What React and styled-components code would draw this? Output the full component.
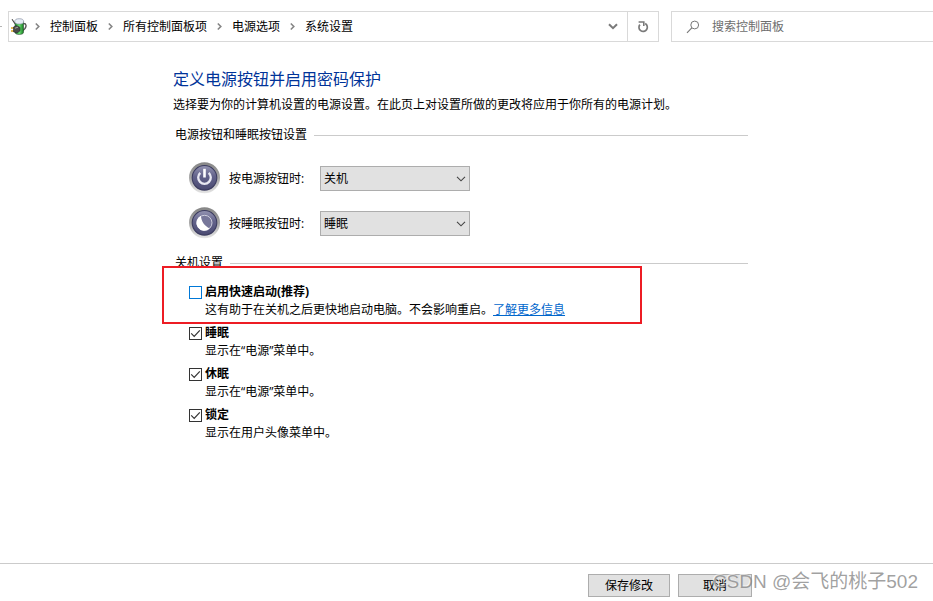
import React from "react";
import styled, { createGlobalStyle } from "styled-components";

const POWER_ACTIONS = ["不采取任何操作", "睡眠", "休眠", "关机"];

const CRUMBS = ["控制面板", "所有控制面板项", "电源选项", "系统设置"];

const SHUTDOWN_OPTIONS = [
  {
    id: "fast-startup",
    label: "启用快速启动(推荐)",
    hint: "这有助于在关机之后更快地启动电脑。不会影响重启。",
    link: "了解更多信息",
    checked: false,
    highlighted: true,
  },
  {
    id: "sleep",
    label: "睡眠",
    hint: "显示在“电源”菜单中。",
    checked: true,
  },
  {
    id: "hibernate",
    label: "休眠",
    hint: "显示在“电源”菜单中。",
    checked: true,
  },
  {
    id: "lock",
    label: "锁定",
    hint: "显示在用户头像菜单中。",
    checked: true,
  },
];

function App() {
  return (
    <>
      <GlobalStyle />
      <Page>
        <TopBar>
          <Gutter>
            <svg width="3" height="3" viewBox="0 0 3 3">
              <path d="M0 1.5h2" stroke="#b5b5b5" />
            </svg>
          </Gutter>
          <AddressBar />
          <SearchBox>
            <SearchIcon />
            <SearchInput
              type="search"
              aria-label="搜索控制面板"
              placeholder="搜索控制面板"
            />
          </SearchBox>
        </TopBar>
        <Main>
          <Title>定义电源按钮并启用密码保护</Title>
          <Intro>
            选择要为你的计算机设置的电源设置。在此页上对设置所做的更改将应用于你所有的电源计划。
          </Intro>
          <section>
            <Legend $top={12}>电源按钮和睡眠按钮设置</Legend>
            <ButtonRows>
              <ButtonSetting
                id="power-button"
                icon={<PowerIcon />}
                label="按电源按钮时:"
                value="关机"
              />
              <ButtonSetting
                id="sleep-button"
                icon={<MoonIcon />}
                label="按睡眠按钮时:"
                value="睡眠"
              />
            </ButtonRows>
          </section>
          <section>
            <Legend $top={14}>关机设置</Legend>
            <OptionList>
              {SHUTDOWN_OPTIONS.map((option) => (
                <ShutdownOption
                  key={option.id}
                  {...option}
                />
              ))}
            </OptionList>
          </section>
        </Main>
        <Footer>
          <Button $width={82}>保存修改</Button>
          <Button $width={74}>取消</Button>
          <Watermark>CSDN @会飞的桃子502</Watermark>
        </Footer>
      </Page>
    </>
  );
}

function AddressBar() {
  return (
    <Address>
      <PowerOptionsIcon />
      <Crumbs>
        {CRUMBS.map((crumb) => (
          <Crumb key={crumb}>
            <Separator viewBox="0 0 25 9">
              <path
                d="M10.8 1.5l3 3-3 3"
                fill="none"
                stroke="#858585"
                strokeWidth="1.6"
              />
            </Separator>
            <CrumbLink href="#">{crumb}</CrumbLink>
          </Crumb>
        ))}
      </Crumbs>
      <BarButton
        $width={28}
        aria-label="历史记录"
      >
        <svg width="10" height="7" viewBox="0 0 10 7">
          <path
            d="M1 1.2l4 4 4-4"
            fill="none"
            stroke="#7a7a7a"
            strokeWidth="2"
          />
        </svg>
      </BarButton>
      <BarButton
        $width={31}
        $divided
        aria-label="刷新"
      >
        <svg width="12" height="13" viewBox="0 0 12 13">
          <path
            d="M8.2 3.6A4.2 4.2 0 1 1 2.9 4.6"
            fill="none"
            stroke="#7a7a7a"
            strokeWidth="1.7"
          />
          <path
            d="M1.6 2h5.2v4"
            fill="none"
            stroke="#7a7a7a"
            strokeWidth="1.6"
          />
        </svg>
      </BarButton>
    </Address>
  );
}

function ButtonSetting({ id, icon, label, value }) {
  return (
    <ButtonRow>
      {icon}
      <RowLabel htmlFor={id}>{label}</RowLabel>
      <SelectWrapper>
        <Select
          id={id}
          defaultValue={value}
        >
          {POWER_ACTIONS.map((action) => (
            <option key={action}>{action}</option>
          ))}
        </Select>
        <SelectArrow viewBox="0 0 10 6">
          <path
            d="M1 .8l4 4 4-4"
            fill="none"
            stroke="#444"
            strokeWidth="1.1"
          />
        </SelectArrow>
      </SelectWrapper>
    </ButtonRow>
  );
}

function ShutdownOption({ id, label, hint, link, checked, highlighted }) {
  return (
    <Option>
      <CheckWrapper>
        <Checkbox
          id={id}
          type="checkbox"
          defaultChecked={checked}
          $active={highlighted}
        />
        <CheckMark viewBox="0 0 13 13">
          <path
            d="M2.2 6.4l3 3 5.6-6"
            fill="none"
            stroke="#333"
            strokeWidth="1.2"
          />
        </CheckMark>
      </CheckWrapper>
      <OptionLabel htmlFor={id}>{label}</OptionLabel>
      <Hint>
        {hint}
        {link && <HelpLink href="#">{link}</HelpLink>}
      </Hint>
      {highlighted && <Highlight />}
    </Option>
  );
}

function PowerOptionsIcon() {
  return (
    <AddressIcon viewBox="0 0 16 18">
      <defs>
        <linearGradient id="battery" x1="0" x2="1">
          <stop offset="0" stopColor="#1c8a2c" />
          <stop offset=".5" stopColor="#6be070" />
          <stop offset="1" stopColor="#167a22" />
        </linearGradient>
      </defs>
      <path
        d="M14.5 5.5c3.2 0 3 3 1.5 5L14 12.5"
        fill="none"
        stroke="#555"
        strokeWidth="1.4"
      />
      <path
        d="M6 3.5v11c0 2.6 8.5 2.6 8.5 0v-11z"
        fill="url(#battery)"
        stroke="#2c4a30"
        strokeWidth=".6"
      />
      <ellipse
        cx="10.2"
        cy="3.4"
        rx="4.4"
        ry="2.7"
        fill="#e6ecf5"
        stroke="#8b93a5"
        strokeWidth=".7"
      />
      <path d="M3 1.2l3 4.5" stroke="#444" strokeWidth="1.1" />
      <path d="M2 10h4M2 13h4" stroke="#d9a520" strokeWidth="1.4" />
      <path
        d="M4.5 9l3-1.4 3.5 1.8v3.4L8 15l-3.5-1.2z"
        fill="#4a4a4a"
        stroke="#2a2a2a"
        strokeWidth=".6"
      />
      <path d="M6 10.2l3-1" stroke="#aaa" strokeWidth=".9" />
    </AddressIcon>
  );
}

function SearchIcon() {
  return (
    <svg width="14" height="14" viewBox="0 0 14 14">
      <circle cx="8.7" cy="5" r="3.9" fill="none" stroke="#777" />
      <path d="M5.8 7.8L1 12.8" stroke="#777" strokeWidth="1.1" />
    </svg>
  );
}

function RoundBase({ id, children }) {
  return (
    <RoundIcon viewBox="0 0 32 33">
      <defs>
        <linearGradient id={`${id}-rim`} x1="0" y1="0" x2="0" y2="1">
          <stop offset="0" stopColor="#858585" />
          <stop offset=".5" stopColor="#a6a6a6" />
          <stop offset="1" stopColor="#e6e6e6" />
        </linearGradient>
        <linearGradient id={`${id}-face`} x1="0" y1="0" x2="0" y2="1">
          <stop offset="0" stopColor="#9494b2" />
          <stop offset=".45" stopColor="#62628a" />
          <stop offset="1" stopColor="#4a4a72" />
        </linearGradient>
      </defs>
      <circle cx="15.5" cy="15.8" r="15.5" fill={`url(#${id}-rim)`} />
      <circle
        cx="15.5"
        cy="15.8"
        r="12.3"
        fill={`url(#${id}-face)`}
        stroke="#3c3c60"
        strokeWidth="1.1"
      />
      {children}
    </RoundIcon>
  );
}

function PowerIcon() {
  return (
    <RoundBase id="power">
      <path
        d="M11.3 10.8a6.3 6.3 0 1 0 8.4 0"
        fill="none"
        stroke="#e8e8f2"
        strokeWidth="2.3"
      />
      <path d="M15.5 6.8v8.7" stroke="#fff" strokeWidth="2.6" />
    </RoundBase>
  );
}

function MoonIcon() {
  return (
    <RoundBase id="moon">
      <circle
        cx="15.5"
        cy="15.8"
        r="7.5"
        fill="#77779a"
        stroke="#d0d0de"
        strokeWidth="1"
      />
      <path
        d="M12 8.8a7.8 7.8 0 1 0 8.6 12.7c-4.6-2.3-8.6-6.9-8.6-12.7z"
        fill="#fff"
      />
    </RoundBase>
  );
}

const GlobalStyle = createGlobalStyle`
  *,
  *::before,
  *::after {
    box-sizing: border-box;
  }

  body {
    margin: 0;
    background: #fff;
    color: #000;
    font-family: "Open Sans", "Noto Sans CJK SC", sans-serif;
    font-size: 12px;
    line-height: 18px;
  }

  button,
  input,
  select {
    font: inherit;
    color: inherit;
  }

  h1,
  h2,
  p,
  ul,
  ol {
    margin: 0;
    padding: 0;
    list-style: none;
  }

  svg {
    display: block;
    flex-shrink: 0;
  }
`;

const Page = styled.div`
  display: flex;
  flex-direction: column;
  min-height: 100vh;
`;

const TopBar = styled.header`
  display: flex;
  padding-top: 11px;
`;

const Gutter = styled.div`
  display: flex;
  align-items: center;
  width: 8px;
`;

const Address = styled.nav`
  display: flex;
  align-items: stretch;
  flex: 1;
  height: 31px;
  border: 1px solid #d9d9d9;
`;

const AddressIcon = styled.svg`
  align-self: center;
  width: 16px;
  height: 18px;
  overflow: visible;
`;

const Crumbs = styled.ol`
  display: flex;
  align-items: center;
  flex: 1;
  white-space: nowrap;
`;

const Crumb = styled.li`
  display: flex;
  align-items: center;
`;

const Separator = styled.svg`
  width: 25px;
  height: 9px;
`;

const CrumbLink = styled.a`
  color: #000;
  text-decoration: none;
`;

const BarButton = styled.button`
  display: grid;
  place-content: center;
  width: ${(props) => props.$width}px;
  padding: 0;
  border: 0;
  border-left: ${(props) => (props.$divided ? "1px solid #d9d9d9" : "0")};
  background: none;
`;

const SearchBox = styled.div`
  display: flex;
  align-items: center;
  flex: 0 0 262px;
  gap: 12px;
  margin-left: 12px;
  padding-left: 14px;
  border: 1px solid #d9d9d9;
  border-right: 0;
`;

const SearchInput = styled.input`
  flex: 1;
  min-width: 0;
  padding: 0;
  border: 0;
  outline: 0;
  background: none;

  &::placeholder {
    color: #6d6d6d;
    opacity: 1;
  }
`;

const Main = styled.main`
  flex: 1;
  padding: 25px 185px 24px 173px;
`;

const Title = styled.h1`
  color: #003399;
  font-size: 16px;
  font-weight: 400;
  line-height: 24px;
`;

const Intro = styled.p`
  margin-top: 5px;
`;

const Legend = styled.h2`
  display: flex;
  align-items: center;
  gap: 7px;
  margin-top: ${(props) => props.$top}px;
  padding-left: 2px;
  font-size: 12px;
  font-weight: 400;

  &::after {
    content: "";
    flex: 1;
    height: 1px;
    background: #cbcbcb;
  }
`;

const ButtonRows = styled.div`
  display: grid;
  gap: 12px;
  padding: 18px 0 0 16px;
`;

const ButtonRow = styled.div`
  display: flex;
  align-items: center;
`;

const RoundIcon = styled.svg`
  width: 32px;
  height: 33px;
`;

const RowLabel = styled.label`
  width: 99px;
  padding-left: 8px;
`;

const SelectWrapper = styled.div`
  display: grid;
  align-items: center;
  width: 150px;
`;

const Select = styled.select`
  grid-area: 1 / 1;
  appearance: none;
  height: 25px;
  padding: 0 20px 0 3px;
  border: 1px solid #adadad;
  border-radius: 0;
  background: #e1e1e1;
`;

const SelectArrow = styled.svg`
  grid-area: 1 / 1;
  justify-self: end;
  width: 10px;
  height: 6px;
  margin-right: 4px;
  pointer-events: none;
`;

const OptionList = styled.ul`
  display: grid;
  gap: 5px;
  padding: 11px 0 0 16px;
`;

const Option = styled.li`
  position: relative;
  display: grid;
  grid-template-columns: 13px 1fr;
  column-gap: 3px;
`;

const CheckWrapper = styled.div`
  display: grid;
  align-self: start;
  margin-top: 3px;
`;

const Checkbox = styled.input`
  grid-area: 1 / 1;
  appearance: none;
  width: 13px;
  height: 13px;
  margin: 0;
  border: 1px solid ${(props) => (props.$active ? "#0078d7" : "#333")};
  background: #fff;
`;

const CheckMark = styled.svg`
  grid-area: 1 / 1;
  width: 13px;
  height: 13px;
  visibility: hidden;
  pointer-events: none;

  ${Checkbox}:checked + & {
    visibility: visible;
  }
`;

const OptionLabel = styled.label`
  justify-self: start;
  font-weight: 700;
`;

const Hint = styled.p`
  grid-column: 2;
`;

const HelpLink = styled.a`
  color: #0066cc;
`;

const Highlight = styled.div`
  position: absolute;
  top: -17px;
  bottom: -5px;
  left: -27px;
  width: 480px;
  border: 2px solid #ed1c24;
  pointer-events: none;
`;

const Footer = styled.footer`
  position: relative;
  display: flex;
  justify-content: flex-end;
  gap: 8px;
  padding: 10px 181px 4px;
  border-top: 1px solid #cbcbcb;
`;

const Button = styled.button`
  width: ${(props) => props.$width}px;
  height: 23px;
  padding: 0;
  border: 1px solid #adadad;
  background: #e1e1e1;
`;

const Watermark = styled.span`
  position: absolute;
  right: 15px;
  bottom: 6px;
  color: rgba(130, 130, 130, 0.75);
  font-family: "Liberation Sans", "Noto Sans CJK SC", sans-serif;
  font-size: 19px;
  line-height: 26px;
  text-shadow: -1px -1px 0 rgba(255, 255, 255, 0.6);
  white-space: nowrap;
  pointer-events: none;
`;

export default App;
